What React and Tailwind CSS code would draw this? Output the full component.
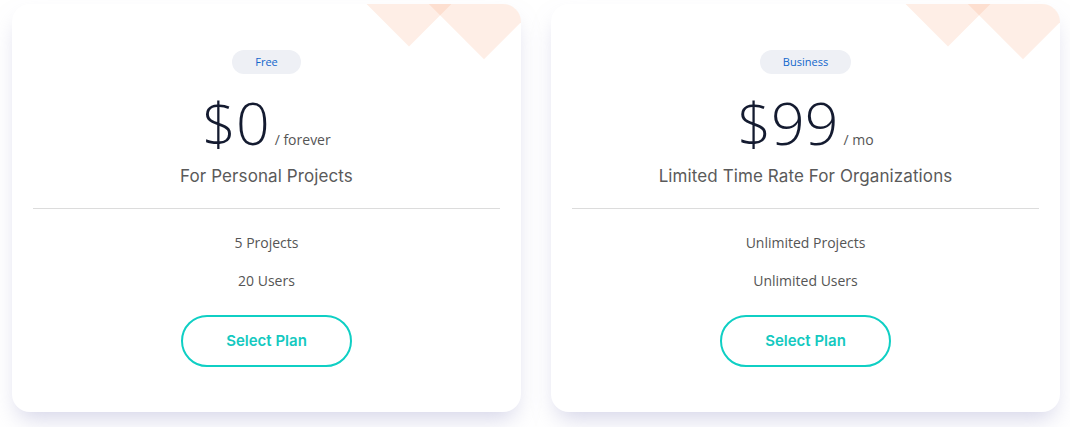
import React from 'react';

const plans = [
  { badge: 'Free', price: '$0', per: '/ forever', title: 'For Personal Projects', features: ['5 Projects', '20 Users'] },
  { badge: 'Business', price: '$99', per: '/ mo', title: 'Limited Time Rate For Organizations', features: ['Unlimited Projects', 'Unlimited Users'] },
];

const PlanCard = ({ plan }) => (
  <div className="relative w-[509px] h-[408px] bg-white rounded-[18px] overflow-hidden shadow-[0_12px_22px_-6px_rgba(170,170,210,0.5)] flex flex-col items-center px-[21px]">
    {/* decorative diamonds */}
    <div className="absolute left-[367px] top-[-30px] w-[60px] h-[60px] rotate-45 bg-[#fb8c5a]/15" />
    <div className="absolute left-[433px] top-[-39px] w-[78px] h-[78px] rotate-45 bg-[#fb8c5a]/15" />

    <span className="relative mt-[46px] h-[24px] px-[23px] flex items-center rounded-full bg-[#eef0f5] text-[11px] text-[#1266cc] font-['Open_Sans',sans-serif]">
      {plan.badge}
    </span>

    <div className="relative mt-[14px] flex items-baseline font-['Open_Sans',sans-serif]">
      <span className="text-[59px] leading-[68px] font-light text-[#141b30]">{plan.price}</span>
      <span className="ml-[5px] text-[14px] text-[#555]">{plan.per}</span>
    </div>

    <h3 className="mt-[7px] text-[17px] leading-[26px] text-[#5a5a5a] font-['Inter',sans-serif] tracking-[0.1px]">{plan.title}</h3>

    <div className="w-full mt-[19px] border-t border-[#dcdcdc]" />

    <ul className="mt-[24px] flex flex-col items-center gap-[18px] font-['Open_Sans',sans-serif] text-[14px] leading-[20px] text-[#555]">
      {plan.features.map(f => <li key={f}>{f}</li>)}
    </ul>

    <button className="mt-[24px] w-[171px] h-[52px] rounded-full border-2 border-[#0fcfc4] text-[#14c9c0] text-[15px] font-semibold font-['Inter',sans-serif]">
      Select Plan
    </button>
  </div>
);

export default function App() {
  return (
    <div className="w-[1070px] h-[427px] bg-white flex gap-[30px] pl-[12px] pt-[4px]">
      {plans.map(p => <PlanCard key={p.badge} plan={p} />)}
    </div>
  );
}
